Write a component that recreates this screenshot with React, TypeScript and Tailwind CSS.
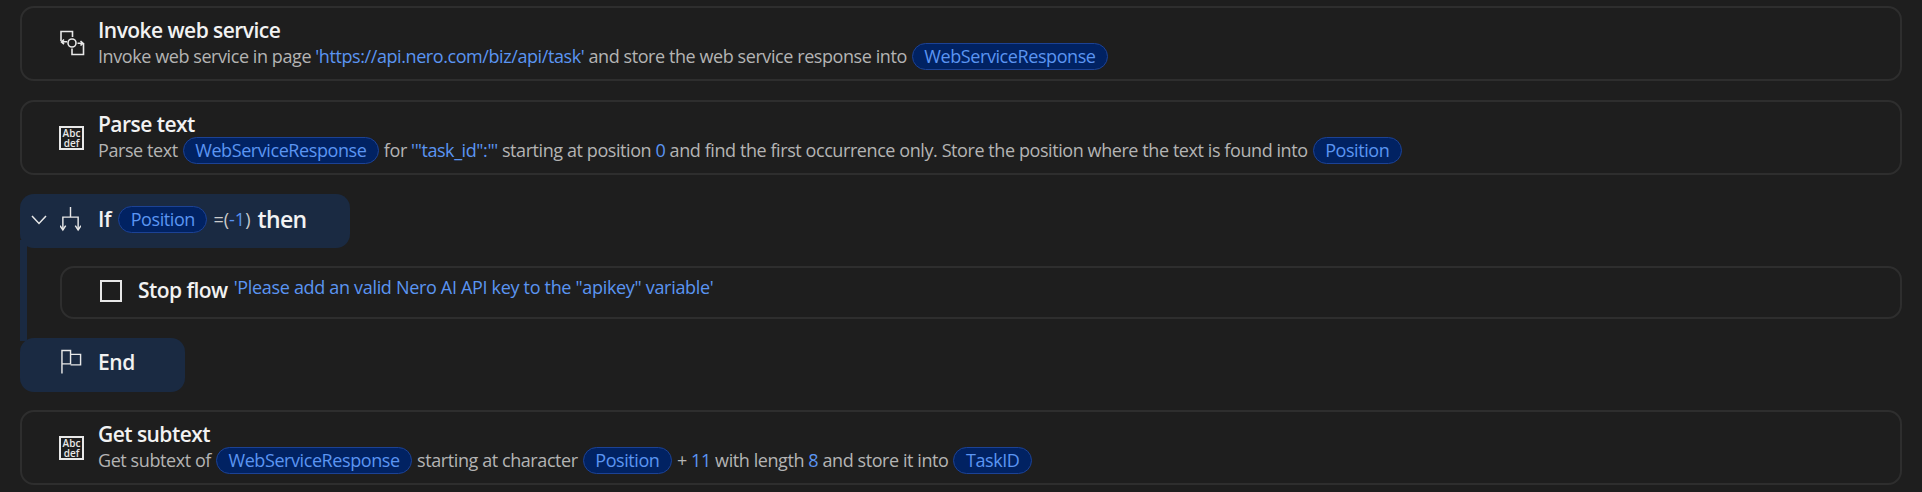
import React from 'react';

function Pill({ children }: { children: React.ReactNode }) {
  return (
    <span className="mx-[5px] inline-flex h-[27px] items-center rounded-full border border-[#1c4295] bg-[#012262] px-[11.5px] text-[#5b95f2]">
      {children}
    </span>
  );
}

function Val({ children }: { children: React.ReactNode }) {
  return <span className="text-[#5b95f2]">{children}</span>;
}

function InvokeIcon() {
  return (
    <svg width="26" height="26" viewBox="0 0 26 26" fill="none" stroke="#e8e8e8" strokeWidth="1.6">
      <path d="M2 11V1.5h11.5V7" />
      <path d="M24.5 13v11.5H13V18.5" />
      <circle cx="13" cy="13" r="4" />
      <path d="M2.5 11.8h5.5M5 9.5l-2.5 2.4 2.5 2.3" />
      <path d="M24 13.2h-5.5M21.5 11l2.5 2.2-2.5 2.3" />
    </svg>
  );
}

function TextIcon() {
  return (
    <div className="mt-[2px] flex h-[24px] w-[25px] items-center justify-center border-2 border-[#e8e8e8] text-center text-[10px] leading-[10px] font-semibold tracking-normal whitespace-pre-line text-[#e8e8e8]">
      {'Abc\ndef'}
    </div>
  );
}

function BranchIcon() {
  return (
    <svg width="21" height="25" viewBox="0 0 22 26" fill="none" stroke="#e8e8e8" strokeWidth="1.5">
      <path d="M11 0v10M3 24V10.5h16V24" />
      <path d="M0 19.5l3 4.5 3-4.5M16 19.5l3 4.5 3-4.5" />
    </svg>
  );
}

function FlagIcon() {
  return (
    <svg width="21" height="25" viewBox="0 0 22 25" fill="none" stroke="#e8e8e8" strokeWidth="1.5">
      <path d="M1 25V1h9v14H1" />
      <path d="M10 5h10.5v11H10" />
    </svg>
  );
}

function Chevron() {
  return (
    <svg width="16" height="10" viewBox="0 0 16 10" fill="none" stroke="#e8e8e8" strokeWidth="1.5">
      <path d="M1 1l7 7.5L15 1" />
    </svg>
  );
}

function ActionCard({ icon, title, children }: { icon: React.ReactNode; title: string; children: React.ReactNode }) {
  return (
    <div className="flex h-[75px] w-[1882px] items-center rounded-[14px] border-2 border-[#2e2e2e]">
      <div className="w-[76px] shrink-0 pl-[37px] pb-[2px]">{icon}</div>
      <div>
        <div className="text-[21px] leading-[26px] font-semibold tracking-[-0.55px] text-[#f2f2f2]">{title}</div>
        <div className="flex h-[27px] items-center whitespace-pre text-[#b4b4b4]">{children}</div>
      </div>
    </div>
  );
}

export default function App() {
  return (
    <div className="h-[492px] w-[1922px] overflow-hidden bg-[#1e1e1e] pt-[6px] pl-[20px] font-['Open_Sans',sans-serif] text-[18px] tracking-[-0.42px]">
      <ActionCard icon={<InvokeIcon />} title="Invoke web service">
        Invoke web service in page <Val>'https://api.nero.com/biz/api/task'</Val> and store the web service response into
        <Pill>WebServiceResponse</Pill>
      </ActionCard>

      <div className="mt-[19px]">
        <ActionCard icon={<TextIcon />} title="Parse text">
          Parse text
          <Pill>WebServiceResponse</Pill>
          for <Val>'"task_id":"'</Val> starting at position <Val>0</Val> and find the first occurrence only. Store the position where the text is found into
          <Pill>Position</Pill>
        </ActionCard>
      </div>

      {/* If block */}
      <div className="mt-[19px] flex h-[54px] w-[330px] items-center rounded-[14px] bg-[#1a2a42] pb-[3px] pl-[11px] text-[#b4b4b4]">
        <div className="w-[29px]"><Chevron /></div>
        <div className="w-[38px]"><BranchIcon /></div>
        <span className="mr-[2px] text-[21px] font-semibold text-[#f2f2f2]">If</span>
        <Pill>Position</Pill>
        <span className="ml-[1px] tracking-normal text-[#cccccc]">=(<Val>-1</Val>)</span>
        <span className="ml-[7px] text-[23px] font-semibold tracking-[-0.6px] text-[#f2f2f2]">then</span>
      </div>

      <div className="-mt-[8px] h-[26px] w-[7px] bg-[#1a2a42]" />
      <div className="flex">
        <div className="w-[7px] bg-[#1a2a42]" />
        <div className="ml-[33px] flex h-[53px] w-[1842px] items-center rounded-[14px] border-2 border-[#2e2e2e] pb-[4px]">
          <div className="ml-[38px] h-[22px] w-[22px] border-2 border-[#e8e8e8]" />
          <span className="ml-[16px] text-[21px] font-semibold tracking-[-0.55px] text-[#f2f2f2]">Stop flow</span>
          <span className="ml-[6px] pb-[6px] tracking-[-0.32px]"><Val>'Please add an valid Nero AI API key to the "apikey" variable'</Val></span>
        </div>
      </div>
      <div className="-mb-[3px] h-[22px] w-[7px] bg-[#1a2a42]" />

      <div className="relative flex h-[54px] w-[165px] items-center rounded-[14px] bg-[#1a2a42] pb-[5px]">
        <div className="w-[78px] pb-[3px] pl-[41px]"><FlagIcon /></div>
        <span className="text-[21px] font-semibold text-[#f2f2f2]">End</span>
      </div>

      <div className="mt-[18px]">
        <ActionCard icon={<TextIcon />} title="Get subtext">
          Get subtext of
          <Pill>WebServiceResponse</Pill>
          starting at character
          <Pill>Position</Pill>
          + <Val>11</Val> with length <Val>8</Val> and store it into
          <Pill>TaskID</Pill>
        </ActionCard>
      </div>
    </div>
  );
}
